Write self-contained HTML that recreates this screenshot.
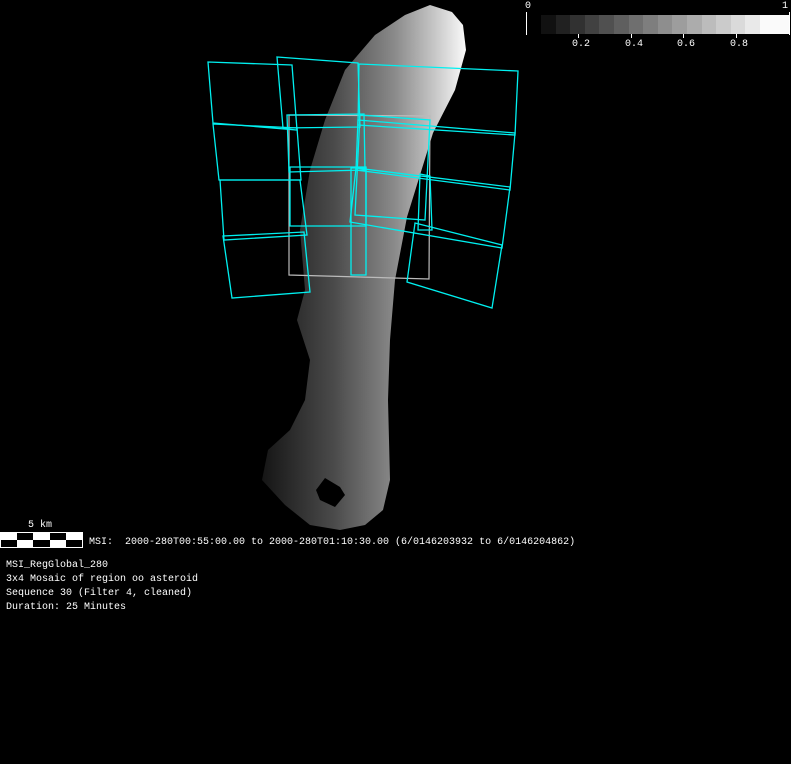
<!DOCTYPE html>
<html><head><meta charset="utf-8"><style>
html,body{margin:0;padding:0;background:#000;}
body{width:791px;height:764px;position:relative;overflow:hidden;font-family:"Liberation Mono",monospace;color:#fff;}
.t{position:absolute;font-size:10px;line-height:14px;white-space:pre;}
</style></head><body>
<svg width="791" height="764" style="position:absolute;left:0;top:0">
<defs>
<linearGradient id="g" x1="0" y1="0" x2="1" y2="0">
<stop offset="0" stop-color="#151515"/>
<stop offset="0.35" stop-color="#4a4a4a"/>
<stop offset="0.65" stop-color="#8a8a8a"/>
<stop offset="0.85" stop-color="#c8c8c8"/>
<stop offset="1" stop-color="#fafafa"/>
</linearGradient>
</defs>
<polygon fill="url(#g)" points="430,5 452,12 463,25 466,50 455,90 433,133 407,217 395,280 390,340 388,400 390,480 383,510 365,525 340,530 310,525 285,505 262,480 268,450 290,430 305,400 310,360 297,320 305,290 300,230 310,170 325,120 345,70 375,35 405,15"/>
<polygon fill="#000" points="325,478 340,487 345,495 335,507 320,500 316,490"/>
<g>
<rect x="541" y="15" width="15" height="19" fill="#111"/><rect x="556" y="15" width="14" height="19" fill="#212121"/><rect x="570" y="15" width="15" height="19" fill="#313131"/><rect x="585" y="15" width="14" height="19" fill="#414141"/><rect x="599" y="15" width="15" height="19" fill="#505050"/><rect x="614" y="15" width="15" height="19" fill="#5f5f5f"/><rect x="629" y="15" width="14" height="19" fill="#6f6f6f"/><rect x="643" y="15" width="15" height="19" fill="#7e7e7e"/><rect x="658" y="15" width="14" height="19" fill="#8e8e8e"/><rect x="672" y="15" width="15" height="19" fill="#9d9d9d"/><rect x="687" y="15" width="15" height="19" fill="#acacac"/><rect x="702" y="15" width="14" height="19" fill="#bcbcbc"/><rect x="716" y="15" width="15" height="19" fill="#cbcbcb"/><rect x="731" y="15" width="14" height="19" fill="#dadada"/><rect x="745" y="15" width="15" height="19" fill="#e9e9e9"/><rect x="760" y="15" width="29" height="19" fill="#fafafa"/>
</g>
<g stroke="#fff" stroke-width="1" fill="none">
<line x1="526.5" y1="12" x2="526.5" y2="35"/><line x1="789.5" y1="12" x2="789.5" y2="35"/>
<line x1="578.5" y1="34" x2="578.5" y2="38"/><line x1="631.5" y1="34" x2="631.5" y2="38"/><line x1="683.5" y1="34" x2="683.5" y2="38"/><line x1="736.5" y1="34" x2="736.5" y2="38"/>
</g>
<rect x="0" y="532" width="83" height="16" fill="#fff"/>
<g fill="#000"><rect x="17" y="533" width="16" height="7"/><rect x="50" y="533" width="16" height="7"/><rect x="1" y="540" width="16" height="7"/><rect x="33" y="540" width="17" height="7"/><rect x="66" y="540" width="16" height="7"/></g>
<g fill="none" stroke="#bbb" stroke-width="1.2"><polygon points="289,115 430,116 429,279 289,275"/></g>
<g fill="none" stroke="#00f0f0" stroke-width="1.3">
<polygon points="208,62 292,65 297,130 213,123"/>
<polygon points="213,124 297,128 301,180 219,180"/>
<polygon points="220,180 300,180 307,235 224,240"/>
<polygon points="223,236 304,232 310,292 232,298"/>
<polygon points="277,57 358,63 360,127 283,128"/>
<polygon points="287,115 364,114 365,170 289,172"/>
<polygon points="290,167 366,167 366,226 290,226"/>
<polygon points="351,168 366,168 366,275 351,275"/>
<polygon points="359,64 518,71 515,135 358,125"/>
<polygon points="358,120 515,133 510,190 356,170"/>
<polygon points="356,168 510,187 502,248 350,222"/>
<polygon points="415,223 502,245 492,308 407,282"/>
<polygon points="360,115 430,120 425,220 355,215"/>
<polygon points="420,174 430,176 432,230 418,230"/>
</g>
</svg>
<div class="t" style="left:525px;top:0px">0</div>
<div class="t" style="left:782px;top:0px">1</div>
<div class="t" style="left:572px;top:38px">0.2</div>
<div class="t" style="left:625px;top:38px">0.4</div>
<div class="t" style="left:677px;top:38px">0.6</div>
<div class="t" style="left:730px;top:38px">0.8</div>
<div class="t" style="left:28px;top:519px">5 km</div>
<div class="t" style="left:89px;top:536px">MSI:  2000-280T00:55:00.00 to 2000-280T01:10:30.00 (6/0146203932 to 6/0146204862)</div>
<div class="t" style="left:6px;top:559px">MSI_RegGlobal_280
3x4 Mosaic of region oo asteroid
Sequence 30 (Filter 4, cleaned)
Duration: 25 Minutes</div>
</body></html>
